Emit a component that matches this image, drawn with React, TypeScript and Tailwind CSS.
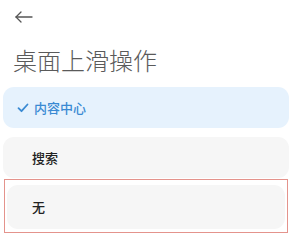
import React from 'react';

const App: React.FC = () => {
  return (
    <div
      className="w-[292px] h-[247px] bg-white overflow-hidden"
      style={{ fontFamily: '"Noto Sans CJK SC", "Noto Sans", sans-serif' }}
    >
      {/* 返回 */}
      <div className="h-[30px] pl-[15px] pt-[11px]">
        <svg width="18" height="12" viewBox="0 0 18 12" fill="none" stroke="#555" strokeWidth="1.3" strokeLinecap="round" strokeLinejoin="round">
          <path d="M1 6h16" />
          <path d="M6 1L1 6l5 5" />
        </svg>
      </div>

      {/* 标题 */}
      <h1 className="pl-[13px] mt-[15px] h-[30px] leading-[30px] text-[24px] font-light text-[#5a5a5a]">
        桌面上滑操作
      </h1>

      {/* 选项 */}
      <div className="mt-[12px] px-[3px] flex flex-col">
        <div className="h-[41px] rounded-[11px] bg-[#e6f2fd] flex items-center pl-[14px] gap-[5px]">
          <svg width="12" height="10" viewBox="0 0 12 10" fill="none" stroke="#3a8ad3" strokeWidth="1.8" strokeLinecap="round" strokeLinejoin="round">
            <path d="M1.5 5.2l3 3L10.5 1.5" />
          </svg>
          <span className="text-[13px] font-medium text-[#3a8ad3]">内容中心</span>
        </div>

        <div className="mt-[9px] h-[41px] rounded-[11px] bg-[#f6f6f6] flex items-center pl-[29px]">
          <span className="text-[13px] font-medium text-[#222]">搜索</span>
        </div>

        <div className="mt-[1px] ml-[1px] mr-[1px] border-[1.5px] border-[#e4938c] px-[2px] pt-[5px] pb-[3px]">
          <div className="h-[44px] rounded-[11px] bg-[#f6f6f6] flex items-center pl-[25px]">
            <span className="text-[13px] font-medium text-[#222]">无</span>
          </div>
        </div>
      </div>
    </div>
  );
};

export default App;
